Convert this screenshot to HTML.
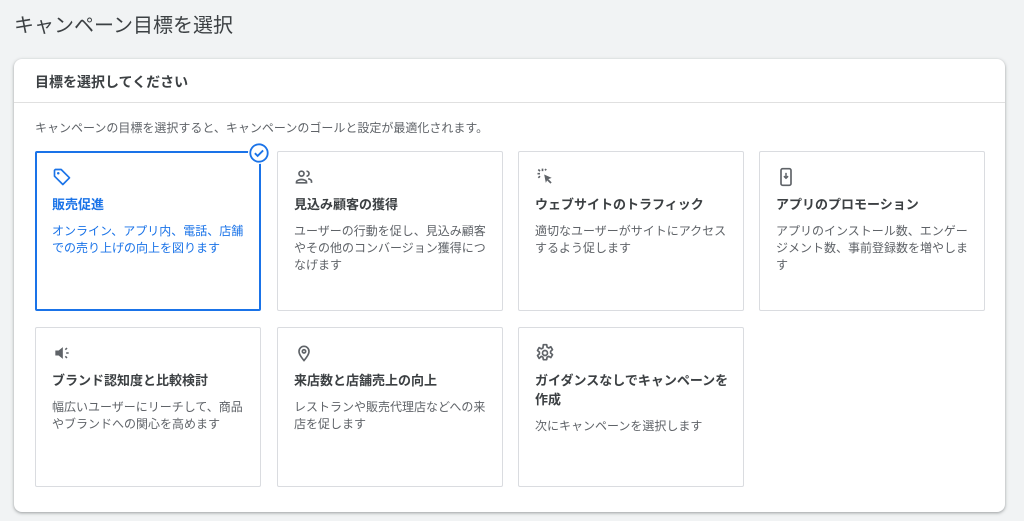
<!DOCTYPE html>
<html><head><meta charset="utf-8"><style>
*{box-sizing:border-box;margin:0;padding:0}
body{width:1024px;height:521px;background:#f1f3f4;font-family:"Liberation Sans","Noto Sans CJK JP",sans-serif;color:#202124;position:relative;overflow:hidden}
h1{position:absolute;left:14px;top:9px;font-size:20px;font-weight:400;color:#3c4043}
.panel{position:absolute;left:14px;top:59px;width:991px;height:453px;background:#fff;border-radius:8px;box-shadow:0 1px 2px rgba(60,64,67,.3),0 1px 3px 1px rgba(60,64,67,.15)}
.hd{height:44px;border-bottom:1px solid #e0e0e0;padding:13px 0 0 21px;font-size:14px;font-weight:700;color:#3c4043}
.desc{position:absolute;left:21px;top:60px;font-size:12px;color:#5f6368}
.card{position:absolute;width:226px;height:160px;border:1px solid #dadce0;border-radius:2px;background:#fff;padding:15px 16px}
.card svg{display:block;width:20px;height:20px}
.t{margin-top:8px;font-size:13px;font-weight:700;line-height:19px;color:#3c4043}
.d{margin-top:9px;font-size:12px;line-height:17px;color:#5f6368}
.sel{border:2px solid #1a73e8;padding:14px 15px}
.sel .t,.sel .d{color:#1a73e8}
.chk{position:absolute;right:-11px;top:-11px;width:22px;height:22px;border-radius:50%;background:#fff}
</style></head><body>
<h1>キャンペーン目標を選択</h1>
<div class="panel">
<div class="hd">目標を選択してください</div>
<div class="desc">キャンペーンの目標を選択すると、キャンペーンのゴールと設定が最適化されます。</div>

<div class="card sel" style="left:21px;top:92px">
<svg viewBox="0 0 24 24"><path d="M3 4v7l10 10 8-8L11 3H4z" fill="none" stroke="#1a73e8" stroke-width="2" stroke-linejoin="round"/><circle cx="7.5" cy="7.5" r="1.5" fill="#1a73e8"/></svg>
<div class="t">販売促進</div><div class="d">オンライン、アプリ内、電話、店舗での売り上げの向上を図ります</div>
<div class="chk"><svg viewBox="0 0 24 24" style="width:22px;height:22px"><circle cx="12" cy="12" r="9.5" fill="#fff" stroke="#1a73e8" stroke-width="2"/><path d="M7.5 12.2l3 3 6-6" fill="none" stroke="#1a73e8" stroke-width="2"/></svg></div>
</div>

<div class="card" style="left:263px;top:92px">
<svg viewBox="0 0 24 24" fill="none" stroke="#5f6368" stroke-width="2"><circle cx="9" cy="8" r="3"/><path d="M3 19v-1c0-2 4-3 6-3s6 1 6 3v1z"/><path d="M15 5a3 3 0 010 6M17 14c2 .5 4 1.5 4 3v2"/></svg>
<div class="t">見込み顧客の獲得</div><div class="d">ユーザーの行動を促し、見込み顧客やその他のコンバージョン獲得につなげます</div></div>

<div class="card" style="left:504px;top:92px">
<svg viewBox="0 0 24 24"><path d="M11 9l9 4-4 1.5 4 4-1.5 1.5-4-4L13 19z" fill="#5f6368"/><g stroke="#5f6368" stroke-width="2"><path d="M9 2v3M3 8h3M4 3l2 2M4 13l2-2M12 4l1.5-1.5"/></g></svg>
<div class="t">ウェブサイトのトラフィック</div><div class="d">適切なユーザーがサイトにアクセスするよう促します</div></div>

<div class="card" style="left:745px;top:92px">
<svg viewBox="0 0 24 24"><rect x="6" y="2" width="12" height="20" rx="2" fill="none" stroke="#5f6368" stroke-width="2"/><path d="M12 7v6M9.5 11l2.5 2.5 2.5-2.5" fill="none" stroke="#5f6368" stroke-width="1.8"/></svg>
<div class="t">アプリのプロモーション</div><div class="d">アプリのインストール数、エンゲージメント数、事前登録数を増やします</div></div>

<div class="card" style="left:21px;top:268px">
<svg viewBox="0 0 24 24"><path d="M4 9h4l5-4v14l-5-4H4z" fill="#5f6368"/><g stroke="#5f6368" stroke-width="1.8"><path d="M16 8l2-2M17 12h3M16 16l2 2"/></g></svg>
<div class="t">ブランド認知度と比較検討</div><div class="d">幅広いユーザーにリーチして、商品やブランドへの関心を高めます</div></div>

<div class="card" style="left:263px;top:268px">
<svg viewBox="0 0 24 24" fill="none" stroke="#5f6368" stroke-width="2"><path d="M12 21s-6-6.5-6-11a6 6 0 0112 0c0 4.5-6 11-6 11z"/><circle cx="12" cy="10" r="2"/></svg>
<div class="t">来店数と店舗売上の向上</div><div class="d">レストランや販売代理店などへの来店を促します</div></div>

<div class="card" style="left:504px;top:268px;padding-right:4px">
<svg viewBox="0 0 24 24" fill="none" stroke="#5f6368" stroke-width="2"><path d="M10 2h4l.5 3 2 1 2.5-1.5 2 3.5-2.3 2v2l2.3 2-2 3.5-2.5-1.5-2 1-.5 3h-4l-.5-3-2-1L5 18.5 3 15l2.3-2v-2L3 9l2-3.5L7.5 7l2-1z" stroke-linejoin="round"/><circle cx="12" cy="12" r="3"/></svg>
<div class="t">ガイダンスなしでキャンペーンを<br>作成</div><div class="d">次にキャンペーンを選択します</div></div>
</div>
</body></html>
